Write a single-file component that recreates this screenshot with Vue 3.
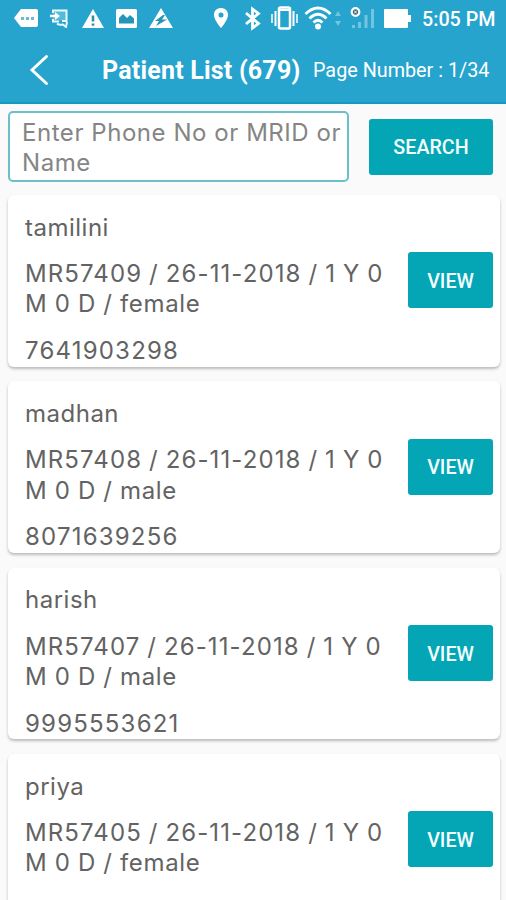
<script setup>
  import { ref } from 'vue'
  const query = ref('')
  const total = ref(679)
  const page = ref('1/34')

  const patients = ref([
    { name: 'tamilini', mrid: 'MR57409', gender: 'female', phone: '7641903298' },
    { name: 'madhan', mrid: 'MR57408', gender: 'male', phone: '8071639256' },
    { name: 'harish', mrid: 'MR57407', gender: 'male', phone: '9995553621' },
    { name: 'priya', mrid: 'MR57405', gender: 'female', phone: '' },
  ])
</script>

<template>
  <div class="screen">
    <header class="top">
      <div class="status">
        <div class="status-left">
          <svg width="24" height="18" viewBox="0 0 24 18"><path d="M7 0H22Q24 0 24 2V16Q24 18 22 18H7L0 9Z" fill="#fff"/><path d="M7 8h3v3H7zM12 8h3v3h-3zM17 8h3v3h-3z" fill="#6dbcd6"/></svg>
          <svg class="chat" width="19" height="19" viewBox="0 0 19 19" fill="none"><path d="M3 1.500H16V11.500H3Z" fill="#58bad6"/><path d="M3 4V1.500H16.500V12H12M3 10v2.500h6" stroke="#e9fbff" stroke-width="2"/><path d="M0 7h8" stroke="#fff" stroke-width="2.500"/><path d="M5 3l5 4-5 4z" fill="#fff"/><path d="M7 14.500q2 2 6 1l3 2.500 1-5" stroke="#e9fbff" stroke-width="2"/></svg>
          <svg class="warn" width="22" height="19" viewBox="0 0 22 19"><path d="M11 0L22 19H0Z" fill="#fff"/><path d="M9.700 6.500h2.600v6H9.700zM9.700 14.500h2.600v2.300H9.700z" fill="#328da9"/></svg>
          <svg class="photo" width="21" height="19" viewBox="0 0 21 19"><rect width="21" height="19" rx="1.500" fill="#fff"/><path d="M3 14.500V9L7 5L11 9L14 6L18 9.500V14.500Z" fill="#2596b7"/></svg>
          <svg class="bolt" width="24" height="20" viewBox="0 0 24 20"><path d="M12 0L24 20H0Z" fill="#fff"/><path d="M14 7L6 13H10L7 18L18 11.500H13L16 7Z" fill="#2596b7"/></svg>
        </div>
        <div class="status-right">
          <svg width="16" height="20" viewBox="0 0 16 20"><path fill-rule="evenodd" d="M8 0C3.500 0 1 3.200 1 7C1 12 8 20 8 20S15 12 15 7C15 3.200 12.500 0 8 0ZM8 4.500A2.500 2.500 0 1 1 8 9.500A2.500 2.500 0 1 1 8 4.500Z" fill="#fff"/></svg>
          <svg class="bt" width="17" height="25" viewBox="0 0 17 25" fill="none" stroke="#fff" stroke-width="2.800"><path d="M2 7L14.500 17.500L8.500 22V3L14.500 7.500L2 18"/></svg>
          <svg class="vibrate" width="27" height="24" viewBox="0 0 27 24" fill="none" stroke="#fff"><rect x="8" y="1.500" width="11" height="21" rx="1.500" stroke-width="2.500"/><path d="M8 4H19" stroke-width="2"/><path d="M4.500 5V20M22.500 5V20" stroke-width="2"/><path d="M1 8V17M26 8V17" stroke-width="1.500"/></svg>
          <svg class="wifi" width="28" height="24" viewBox="0 0 28 24" fill="none" stroke="#fff" stroke-width="2.800"><path d="M1.500 8Q14 -4 26.500 8M5.500 12.500Q14 4 22.500 12.500M9.500 16.500Q14 12 18.500 16.500"/><circle cx="14" cy="20.500" r="3" fill="#fff" stroke="none"/></svg>
          <svg class="arrows" width="8" height="17" viewBox="0 0 8 17"><path d="M4 1L7 6H1ZM4 16L1 11H7Z" fill="#72c5df"/></svg>
          <svg class="signal" width="25" height="22" viewBox="0 0 25 22"><circle cx="5.500" cy="5" r="3.800" fill="#31667b" stroke="#fff" stroke-width="2.200"/><path d="M4 3.500l3 3M7 3.500l-3 3" stroke="#fff" stroke-width="1"/><path d="M2 18h3v3H2zM8 15h3v6H8zM14.500 8h3v13h-3zM21 2h3v19h-3z" fill="#72c5df"/></svg>
          <svg class="battery" width="27" height="19" viewBox="0 0 27 19"><path d="M1 0H23Q24 0 24 1V6H27V13H24V18Q24 19 23 19H1Q0 19 0 18V1Q0 0 1 0Z" fill="#fff"/></svg>
          <span class="clock">5:05 PM</span>
        </div>
      </div>
      <div class="bar">
        <svg class="back" width="20" height="32" viewBox="0 0 20 32" fill="none" stroke="#fff" stroke-width="3" stroke-linecap="round"><path d="M17.500 2.500L3 16L17.500 29.500"/></svg>
        <h1 class="title">Patient List ({{ total }})</h1>
        <span class="page">Page Number : {{ page }}</span>
      </div>
    </header>

    <div class="search">
      <textarea v-model="query" placeholder="Enter Phone No or MRID or Name" class="search-input"></textarea>
      <button class="btn btn-search">SEARCH</button>
    </div>

    <div class="list">
      <div v-for="p in patients" :key="p.mrid" class="card">
        <div class="info">
          <p class="name">{{ p.name }}</p>
          <div class="detail">
            <p class="visit">{{ p.mrid }} / 26-11-2018 / 1 Y 0</p>
            <p class="gender">M 0 D / {{ p.gender }}</p>
          </div>
          <p class="phone">{{ p.phone }}</p>
        </div>
        <button class="btn btn-view">VIEW</button>
      </div>
    </div>
  </div>
</template>

<style>
body {
  margin: 0;
  overflow: hidden;
}
</style>

<style scoped>
.screen {
  width: 506px;
  height: 900px;
  overflow: hidden;
  background: #fafafa;
  font-family: Inter, Roboto, sans-serif;
}

.top {
  box-sizing: border-box;
  height: 104px;
  background: #26a4cd;
  border-bottom: 2px solid #159abf;
  color: #fff;
  font-family: Roboto, sans-serif;
}

.status {
  display: flex;
  justify-content: space-between;
  height: 36px;
  padding: 0 11px 0 14px;
}

.status-left,
.status-right {
  display: flex;
  align-items: center;
}

.status svg {
  flex: none;
}

.chat { margin-left: 12px; }
.warn { margin-left: 13px; }
.photo { margin-left: 12px; }
.bolt { margin-left: 12px; }
.bt { margin-left: 15px; }
.vibrate { margin-left: 10px; }
.wifi { margin-left: 6px; }
.arrows { margin-left: 2px; }
.signal { margin-left: 8px; }
.battery { margin-left: 9px; }

.clock {
  width: 73px;
  margin-left: 11px;
  padding-top: 2px;
  font-size: 19.7px;
  font-weight: 500;
  white-space: nowrap;
}

.bar {
  display: flex;
  align-items: center;
  height: 68px;
  padding-left: 29px;
}

.title {
  width: 199px;
  margin: 0 0 0 53px;
  padding-top: 1px;
  font-size: 25px;
  font-weight: 700;
  letter-spacing: 0.2px;
  white-space: nowrap;
}

.page {
  margin-left: 12px;
  padding-top: 1px;
  font-size: 19.8px;
  white-space: nowrap;
}

.search {
  display: flex;
  align-items: center;
  justify-content: space-between;
  height: 71px;
  padding: 7px 13px 0 8px;
}

.search-input {
  box-sizing: border-box;
  width: 341px;
  height: 71px;
  padding: 5px 0 0 12px;
  border: 2px solid #68c0c8;
  border-radius: 5px;
  background: #fff;
  font-family: inherit;
  font-size: 24px;
  line-height: 30px;
  letter-spacing: 0.55px;
  resize: none;
  overflow: hidden;
}

.search-input::placeholder {
  color: #858585;
}

.btn {
  box-sizing: border-box;
  height: 56px;
  padding: 2px 0 0;
  border: none;
  border-radius: 3px;
  background: #04a5b5;
  color: #f2ffff;
  font-family: Roboto, sans-serif;
  font-size: 19.7px;
  font-weight: 500;
}

.btn-search {
  width: 124px;
}

.btn-view {
  flex: none;
  width: 85px;
}

.list {
  display: flex;
  flex-direction: column;
  gap: 14.9px;
  padding: 13px 6px 0 8px;
}

.card {
  box-sizing: border-box;
  display: flex;
  flex: none;
  align-items: center;
  justify-content: space-between;
  height: 171.5px;
  padding: 0 7px 1px 17px;
  border-radius: 6px;
  background: #fff;
  box-shadow: 0 2px 3px rgba(0, 0, 0, 0.25);
}

.info {
  display: flex;
  flex-direction: column;
  gap: 16px;
  align-self: flex-start;
  width: 368px;
  padding-top: 17.5px;
}

.info p {
  margin: 0;
  color: #636363;
  font-size: 24px;
  line-height: 30.4px;
}

.name {
  letter-spacing: 0.5px;
}

.visit {
  letter-spacing: 1.1px;
  word-spacing: -0.9px;
  white-space: nowrap;
}

.gender {
  letter-spacing: 0.65px;
}

.phone {
  letter-spacing: 1.2px;
}
</style>
